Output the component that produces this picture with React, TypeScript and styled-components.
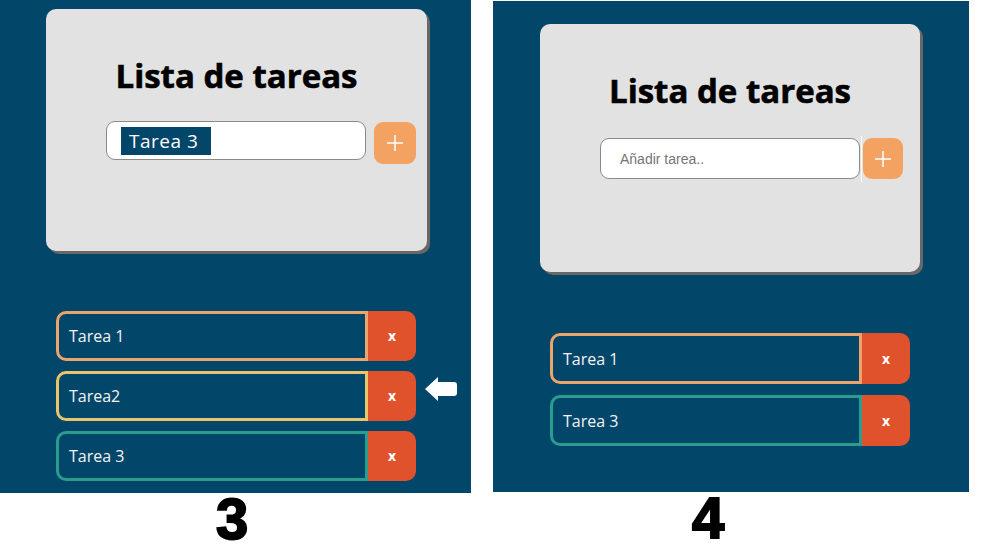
import React from "react";
import styled, { createGlobalStyle } from "styled-components";

const GlobalStyle = createGlobalStyle`
  html, body { margin: 0; padding: 0; background: #ffffff; }
  body { font-family: "Open Sans", "Noto Sans", sans-serif; }
  * { box-sizing: border-box; }
`;

const Page = styled.div`
  display: flex;
  gap: 22px;
  align-items: flex-start;
  width: 984px;
  height: 552px;
  overflow: hidden;
`;

const Shot = styled.section<{ $width: number; $top: number }>`
  display: flex;
  flex-direction: column;
  width: ${(p) => p.$width}px;
  padding-top: ${(p) => p.$top}px;
`;

const Panel = styled.div<{ $height: number }>`
  height: ${(p) => p.$height}px;
  background: #02466a;
  display: flex;
  flex-direction: column;
`;

const Card = styled.div<{ $top: number; $left: number; $w: number; $h: number }>`
  margin: ${(p) => p.$top}px 0 0 ${(p) => p.$left}px;
  width: ${(p) => p.$w}px;
  height: ${(p) => p.$h}px;
  background: #e2e2e2;
  border-radius: 10px;
  box-shadow: 3px 3px 0 #686868;
  padding-top: 48px;
  display: flex;
  flex-direction: column;
`;

const Title = styled.h1`
  margin: 0;
  text-align: center;
  font-family: "Open Sans", "Noto Sans", sans-serif;
  font-weight: 700;
  font-size: 33px;
  line-height: 38px;
  color: #000;
  -webkit-text-stroke: 0.6px #000;
`;

const Form = styled.div<{ $gap: number }>`
  display: flex;
  align-items: flex-start;
  padding-left: 60px;
  margin-top: ${(p) => p.$gap}px;
`;

const InputBox = styled.div<{ $h: number }>`
  width: 260px;
  height: ${(p) => p.$h}px;
  background: #ffffff;
  border: 1px solid #8a8a8a;
  border-radius: 9px;
  display: flex;
  align-items: center;
`;

const Selected = styled.span`
  margin-left: 14px;
  padding: 0 13px 0 8px;
  background: #02466a;
  color: #ffffff;
  font-family: "Open Sans", "Noto Sans", sans-serif;
  font-size: 19px;
  letter-spacing: 0.5px;
  line-height: 28px;
`;

const Placeholder = styled.span`
  margin-left: 19px;
  color: #757575;
  font-family: "Liberation Sans", Arial, sans-serif;
  font-size: 14px;
`;

const Caret = styled.div`
  width: 1px;
  height: 46px;
  margin: -2px 1px 0 1px;
  background: #ffffff;
`;

const AddButton = styled.button<{ $w: number; $h: number; $gap: number; $drop: number }>`
  width: ${(p) => p.$w}px;
  height: ${(p) => p.$h}px;
  margin-left: ${(p) => p.$gap}px;
  margin-top: ${(p) => p.$drop}px;
  padding: 0;
  border: none;
  border-radius: 9px;
  background: #f4a261;
  display: flex;
  align-items: center;
  justify-content: center;
`;

const Tasks = styled.ul<{ $top: number; $left: number; $gap: number }>`
  list-style: none;
  margin: ${(p) => p.$top}px 0 0 ${(p) => p.$left}px;
  padding: 0;
  display: flex;
  flex-direction: column;
  gap: ${(p) => p.$gap}px;
  width: 360px;
`;

const TaskRow = styled.li<{ $h: number }>`
  position: relative;
  display: flex;
  height: ${(p) => p.$h}px;
`;

const TaskText = styled.div<{ $color: string }>`
  flex: 1;
  display: flex;
  align-items: center;
  padding-left: 10px;
  border: 3px solid ${(p) => p.$color};
  border-radius: 10px 0 0 10px;
  color: #f4f4f4;
  font-family: "Open Sans", "Noto Sans", sans-serif;
  font-size: 16px;
`;

const DeleteButton = styled.button`
  width: 48px;
  height: 100%;
  padding: 0;
  border: none;
  border-radius: 0 10px 10px 0;
  background: #e0522c;
  color: #ffffff;
  font-family: "Open Sans", "Noto Sans", sans-serif;
  font-weight: 700;
  font-size: 14px;
  line-height: 1;
`;

const Pointer = styled.svg`
  position: absolute;
  left: calc(100% + 9px);
  top: 6px;
`;

const Label = styled.div<{ $left: number }>`
  margin-top: -3px;
  padding-left: ${(p) => p.$left}px;
  font-family: "Liberation Sans", Arial, sans-serif;
  font-weight: 700;
  font-size: 58px;
  line-height: 58px;
  color: #000;
  -webkit-text-stroke: 2px #000;
`;

const PlusIcon = () => (
  <svg width="18" height="18" viewBox="0 0 18 18">
    <path d="M9 1v16M1 9h16" stroke="#ffffff" strokeWidth="1.6" />
  </svg>
);

const ArrowIcon = () => (
  <Pointer width="32" height="24" viewBox="0 0 32 24">
    <path d="M0 12 L13 0 L13 5 L29 5 Q32 5 32 8 L32 16 Q32 19 29 19 L13 19 L13 24 Z" fill="#ffffff" />
  </Pointer>
);

type Task = { text: string; color: string; pointer?: boolean };

type ShotConfig = {
  label: string;
  labelLeft: number;
  width: number;
  top: number;
  panelH: number;
  card: { top: number; left: number; w: number; h: number };
  formGap: number;
  inputH: number;
  selected?: string;
  btn: { w: number; h: number; gap: number; drop: number };
  caret?: boolean;
  tasks: { top: number; left: number; gap: number; h: number; items: Task[] };
};

const shots: ShotConfig[] = [
  {
    label: "3",
    labelLeft: 216,
    width: 471,
    top: 0,
    panelH: 493,
    card: { top: 9, left: 46, w: 381, h: 242 },
    formGap: 26,
    inputH: 39,
    selected: "Tarea 3",
    btn: { w: 42, h: 42, gap: 8, drop: 1 },
    tasks: {
      top: 60,
      left: 56,
      gap: 10,
      h: 50,
      items: [
        { text: "Tarea 1", color: "#eda46a" },
        { text: "Tarea2", color: "#e9c46a", pointer: true },
        { text: "Tarea 3", color: "#2a9d8f" },
      ],
    },
  },
  {
    label: "4",
    labelLeft: 199,
    width: 476,
    top: 1,
    panelH: 491,
    card: { top: 23, left: 47, w: 380, h: 248 },
    formGap: 28,
    inputH: 41,
    btn: { w: 40, h: 41, gap: 0, drop: 0 },
    caret: true,
    tasks: {
      top: 61,
      left: 57,
      gap: 11,
      h: 51,
      items: [
        { text: "Tarea 1", color: "#eda46a" },
        { text: "Tarea 3", color: "#2a9d8f" },
      ],
    },
  },
];

export default function App() {
  return (
    <>
      <GlobalStyle />
      <Page>
        {shots.map((s) => (
          <Shot key={s.label} $width={s.width} $top={s.top}>
            <Panel $height={s.panelH}>
              <Card $top={s.card.top} $left={s.card.left} $w={s.card.w} $h={s.card.h}>
                <Title>Lista de tareas</Title>
                <Form $gap={s.formGap}>
                  <InputBox $h={s.inputH}>
                    {s.selected ? <Selected>{s.selected}</Selected> : <Placeholder>Añadir tarea..</Placeholder>}
                  </InputBox>
                  {s.caret && <Caret />}
                  <AddButton $w={s.btn.w} $h={s.btn.h} $gap={s.btn.gap} $drop={s.btn.drop}>
                    <PlusIcon />
                  </AddButton>
                </Form>
              </Card>
              <Tasks $top={s.tasks.top} $left={s.tasks.left} $gap={s.tasks.gap}>
                {s.tasks.items.map((t) => (
                  <TaskRow key={t.text} $h={s.tasks.h}>
                    <TaskText $color={t.color}>{t.text}</TaskText>
                    <DeleteButton>x</DeleteButton>
                    {t.pointer && <ArrowIcon />}
                  </TaskRow>
                ))}
              </Tasks>
            </Panel>
            <Label $left={s.labelLeft}>{s.label}</Label>
          </Shot>
        ))}
      </Page>
    </>
  );
}
